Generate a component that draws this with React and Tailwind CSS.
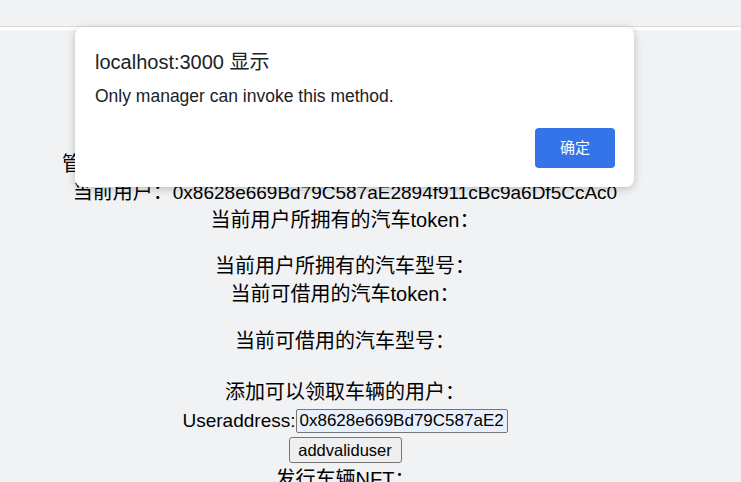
export default function App() {
  const font = { fontFamily: '"Liberation Sans", "Noto Sans CJK SC", sans-serif' };
  const line = 'h-[28px] whitespace-nowrap';
  return (
    <div className="relative min-h-[482px] w-[741px] overflow-hidden bg-[#f1f2f4] text-black" style={font}>
      {/* browser strip */}
      <div className="h-[27px] border-b border-[#dadbdd] bg-[#f1f2f4]" />
      <div className="h-[3px] bg-white" />

      {/* page */}
      <div className="w-[690px] pt-[120px] text-center text-[20px] leading-[28px]">
        <div className={line}>管理员地址：<span className="text-[19px]">0x5B38Da6a701c568545dCfcB03FcB875f56beddC4</span></div>
        <div className={line}>当前用户：<span className="text-[19px]">0x8628e669Bd79C587aE2894f911cBc9a6Df5CcAc0</span></div>
        <div className={line}>当前用户所拥有的汽车token：</div>
        <div className={`${line} mt-[18px]`}>当前用户所拥有的汽车型号：</div>
        <div className={line}>当前可借用的汽车token：</div>
        <div className={`${line} mt-[19px]`}>当前可借用的汽车型号：</div>
        <div className={`${line} mt-[23px]`}>添加可以领取车辆的用户：</div>
        <div className="flex h-[29px] items-center justify-center">
          <span className="text-[19px]">Useraddress:</span>
          <input
            readOnly
            value="0x8628e669Bd79C587aE2894f911cBc9a6Df5CcAc0"
            className="h-[24px] w-[212px] rounded-[2px] border border-[#767676] bg-[#e8f0fe] px-[3px] text-[17px] text-black outline-none"
            style={{ fontFamily: '"Liberation Sans", sans-serif' }}
          />
        </div>
        <div className="flex h-[30px] items-center justify-center">
          <button
            type="button"
            className="h-[26px] w-[113px] rounded-[3px] border border-[#767676] bg-[#efefef] text-[16.5px] leading-none text-black"
            style={{ fontFamily: '"Liberation Sans", sans-serif' }}
          >
            addvaliduser
          </button>
        </div>
        <div className={line}>发行车辆NFT：</div>
      </div>

      {/* alert dialog */}
      <div className="absolute left-[75px] top-[27px] h-[160px] w-[559px] rounded-[8px] bg-white shadow-[0_2px_8px_rgba(0,0,0,0.22)]">
        <div className="pl-[20px] pt-[21px]">
          <div className="text-[20px] leading-[28px] text-[#202124]">localhost:3000 显示</div>
          <div className="mt-[8px] text-[17.5px] leading-[24px] text-[#202124]">Only manager can invoke this method.</div>
        </div>
        <button
          type="button"
          className="absolute left-[460px] top-[101px] flex h-[40px] w-[80px] items-center justify-center rounded-[4px] bg-[#3574e8] text-[15px] text-white"
        >
          确定
        </button>
      </div>
    </div>
  );
}
